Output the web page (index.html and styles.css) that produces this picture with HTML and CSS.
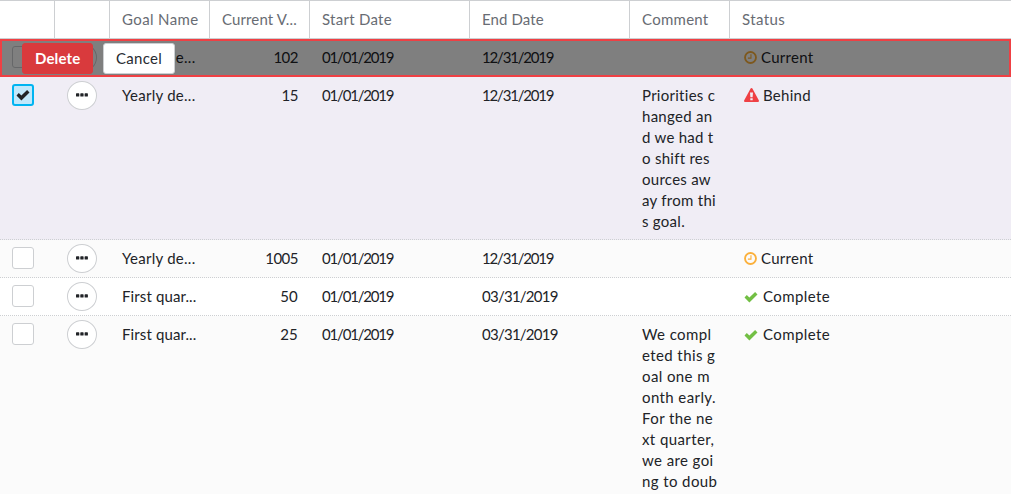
FILE: index.html
```html
<!DOCTYPE html>
<html lang="en">
<head>
<meta charset="utf-8">
<title>Goals</title>
<link rel="stylesheet" href="styles.css">
</head>
<body>
<svg class="defs" width="0" height="0">
  <symbol id="check" viewBox="0 0 14 11"><path d="M.5 5.4L2.8 3.1L5.4 5.6L11.1 .1L13.5 2.4L5.4 10.6Z" fill="currentColor"/></symbol>
  <symbol id="dots" viewBox="0 0 12 4"><path d="M0 .9Q0 .3.6.3H2.7Q3.3.3 3.3.9V2.9Q3.3 3.5 2.7 3.5H.6Q0 3.5 0 2.9ZM4.3.9Q4.3.3 4.9.3H7Q7.6.3 7.6.9V2.9Q7.6 3.5 7 3.5H4.9Q4.3 3.5 4.3 2.9ZM8.6.9Q8.6.3 9.2.3H11.3Q11.9.3 11.9.9V2.9Q11.9 3.5 11.3 3.5H9.2Q8.6 3.5 8.6 2.9Z" fill="currentColor"/></symbol>
  <symbol id="clock" viewBox="0 0 14 14"><circle cx="7" cy="7" r="5.9" fill="none" stroke="currentColor" stroke-width="2"/><path d="M7.5 3.4V7.7H4.2" fill="none" stroke="currentColor" stroke-width="1.2"/></symbol>
  <symbol id="warning" viewBox="0 0 15 14"><path fill-rule="evenodd" d="M7.5 0Q8.1 0 8.4.6L14.9 12.4Q15.2 14 14 14H1Q-.2 14 .1 12.4L6.6.6Q6.9 0 7.5 0ZM6 4.5L6.4 9.2H8.6L9 4.5ZM6.3 10.2V12.2H8.7V10.2Z" fill="currentColor"/></symbol>
</svg>
<main class="grid">
  <div class="row header">
    <div class="cell"></div><div class="cell"></div>
    <div class="cell title">Goal Name</div><div class="cell narrow">Current V...</div><div class="cell">Start Date</div><div class="cell narrow">End Date</div><div class="cell">Comment</div><div class="cell title">Status</div>
  </div>
  <div class="row deleting">
    <div class="cell"><span class="box"></span></div><div class="cell"><span class="menu"><svg><use href="#dots"/></svg></span></div>
    <div class="cell">Yearly de...</div><div class="cell num">102</div><div class="cell date">01/01/2019</div><div class="cell date">12/31/2019</div><div class="cell"></div>
    <div class="cell status"><svg class="clock"><use href="#clock"/></svg>Current</div>
    <div class="overlay"><button class="btn danger">Delete</button><button class="btn">Cancel</button></div>
  </div>
  <div class="row selected">
    <div class="cell"><span class="box checked"><svg><use href="#check"/></svg></span></div><div class="cell"><span class="menu"><svg><use href="#dots"/></svg></span></div>
    <div class="cell">Yearly de...</div><div class="cell num">15</div><div class="cell date">01/01/2019</div><div class="cell date">12/31/2019</div>
    <div class="cell comment">Priorities c<br>hanged an<br>d we had t<br>o shift res<br>ources aw<br>ay from thi<br>s goal.</div>
    <div class="cell status"><svg class="warning"><use href="#warning"/></svg>Behind</div>
  </div>
  <div class="row alt">
    <div class="cell"><span class="box"></span></div><div class="cell"><span class="menu"><svg><use href="#dots"/></svg></span></div>
    <div class="cell">Yearly de...</div><div class="cell num">1005</div><div class="cell date">01/01/2019</div><div class="cell date">12/31/2019</div><div class="cell"></div>
    <div class="cell status"><svg class="clock"><use href="#clock"/></svg>Current</div>
  </div>
  <div class="row">
    <div class="cell"><span class="box"></span></div><div class="cell"><span class="menu"><svg><use href="#dots"/></svg></span></div>
    <div class="cell narrow">First quar...</div><div class="cell num even">50</div><div class="cell date">01/01/2019</div><div class="cell date wide">03/31/2019</div><div class="cell"></div>
    <div class="cell status complete"><svg class="done"><use href="#check"/></svg>Complete</div>
  </div>
  <div class="row alt">
    <div class="cell"><span class="box"></span></div><div class="cell"><span class="menu"><svg><use href="#dots"/></svg></span></div>
    <div class="cell narrow">First quar...</div><div class="cell num even">25</div><div class="cell date">01/01/2019</div><div class="cell date wide">03/31/2019</div>
    <div class="cell comment spaced">We compl<br>eted this g<br>oal one m<br>onth early.<br>For the ne<br>xt quarter,<br>we are goi<br>ng to doub</div>
    <div class="cell status complete"><svg class="done"><use href="#check"/></svg>Complete</div>
  </div>
</main>
</body>
</html>
```
FILE: styles.css
```css
* { box-sizing: border-box; }
body {
  margin: 0;
  height: 494px;
  overflow: hidden;
  background: #fff;
  color: #212327;
  font: 15px/21px Lato, "Open Sans", sans-serif;
  letter-spacing: .27px;
}
.defs { position: absolute; }
.grid { border-top: 1px solid #cdcfd2; }
.row {
  display: grid;
  grid-template-columns: 55px 55px 100px 100px 160px 160px 100px 1fr;
  min-height: 38px;
  border-bottom: 1px dotted #cdcfd2;
  position: relative;
}
.cell { padding: 8px 12px; white-space: nowrap; }
.row:not(.header) .cell { padding-bottom: 7px; }
.header { color: #686c73; border-bottom: 1px solid #cdcfd2; }
.header .cell { border-right: 1px solid #cdcfd2; }
.header .cell:last-child { border-right: 0; }
.alt { background: #fbfbfb; }
.selected { background: #f0edf5; }
.title { letter-spacing: .38px; }
.narrow { letter-spacing: .12px; }
.num { text-align: right; letter-spacing: -.5px; }
.even { letter-spacing: .2px; }
.date { letter-spacing: -1.18px; }
.wide { letter-spacing: -.75px; }
.comment.spaced { letter-spacing: .4px; }
.complete { letter-spacing: .42px; }
.box {
  display: flex;
  align-items: center;
  justify-content: center;
  width: 22px;
  height: 22px;
  margin-top: -1px;
  border: 1px solid #cdcfd2;
  border-radius: 3px;
  background: #fff;
}
.checked { border: 2px solid #00b4f1; background: #c1e8fb; }
.checked svg { width: 14px; height: 11px; }
.menu {
  display: flex;
  align-items: center;
  justify-content: center;
  width: 30px;
  height: 29px;
  margin: -4px 0;
  border: 1px solid #cdcfd2;
  border-radius: 50%;
  background: #fff;
}
.menu svg { width: 12px; height: 4px; margin-bottom: 1px; }
.status { display: flex; align-items: flex-start; padding-left: 14px; }
.status svg { flex: none; }
.clock { width: 13px; height: 13px; margin: 4px 4px 0 0; color: #fbb03b; }
.warning { width: 15px; height: 14px; margin: 3px 4px 0 0; color: #ef4044; }
.done { width: 14px; height: 11px; margin: 6px 5px 0 0; color: #72bf44; }
.overlay {
  position: absolute;
  inset: 0 0 -1px;
  display: flex;
  align-items: center;
  gap: 10px;
  padding-left: 20px;
  border: 2px solid #ef4044;
  background: rgba(0, 0, 0, .5);
}
.btn {
  height: 31px;
  padding: 0 12px;
  border: 1px solid #cdcfd2;
  border-radius: 3px;
  background: #fff;
  color: #282b31;
  font: inherit;
  letter-spacing: .27px;
  width: 72px;
  text-align: center;
}
.danger { width: 71px; border-color: #d93a3d; background: #d93a3d; color: #fff; font-weight: 700; letter-spacing: .15px; }
```
